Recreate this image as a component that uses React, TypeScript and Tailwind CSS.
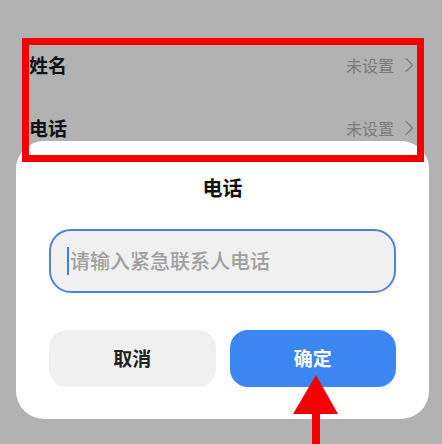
const Chevron = () => (
  <svg width="10" height="16" viewBox="0 0 10 16" fill="none" className="ml-[10px]">
    <polyline points="2,1.5 8.5,8 2,14.5" stroke="#7f7f7f" strokeWidth="1.4" strokeLinecap="round" strokeLinejoin="round" />
  </svg>
);

const Row = ({ label, className }: { label: string; className?: string }) => (
  <div className={`flex h-[40px] items-center justify-between pr-[3px] ${className ?? ''}`}>
    <span className="text-[19px] font-bold text-[#111]">{label}</span>
    <div className="flex items-center">
      <span className="text-[16px] text-[#7b7b7b]">未设置</span>
      <Chevron />
    </div>
  </div>
);

export default function App() {
  return (
    <div
      className="relative h-[444px] w-[442px] overflow-hidden bg-[#b2b2b2] pt-[38px]"
      style={{ fontFamily: '"Noto Sans CJK SC", "Noto Sans", sans-serif' }}
    >
      {/* highlighted rows */}
      <div className="relative z-10 mx-[22px] w-[402px] border-[7px] border-[#f40000] pb-[7px]">
        <Row label="姓名" />
        <Row label="电话" className="mt-[23px]" />
      </div>

      {/* dialog */}
      <div className="absolute left-[16px] top-[141px] z-0 flex h-[278px] w-[413px] flex-col rounded-[28px] bg-white px-[33px] pt-[35px]">
        <h2 className="text-center text-[20px] font-bold leading-[24px] text-[#111]">电话</h2>
        <div className="mt-[29px] flex h-[64px] items-center rounded-[22px] border-2 border-[#4d82d6] bg-[#f0f0f0] pl-[16px]">
          <span className="h-[28px] w-[2px] bg-[#3f7fe0]" />
          <span className="ml-[1px] text-[20px] font-medium text-[#a0a0a0]">请输入紧急联系人电话</span>
        </div>
        <div className="mt-[37px] grid grid-cols-2 gap-[14px]">
          <button className="flex h-[57px] items-center justify-center rounded-[18px] bg-[#f0f0f0] text-[19px] font-bold text-[#222]">
            取消
          </button>
          <button className="flex h-[57px] items-center justify-center rounded-[18px] bg-[#3b86f2] text-[19px] font-bold text-white">
            确定
          </button>
        </div>
      </div>

      {/* arrow annotation */}
      <svg className="absolute left-0 top-0 z-20" width="442" height="444" viewBox="0 0 442 444">
        <polygon points="316,375 293,414 338,414" fill="#f40000" />
        <rect x="312" y="413" width="8" height="31" fill="#f40000" />
      </svg>
    </div>
  );
}
